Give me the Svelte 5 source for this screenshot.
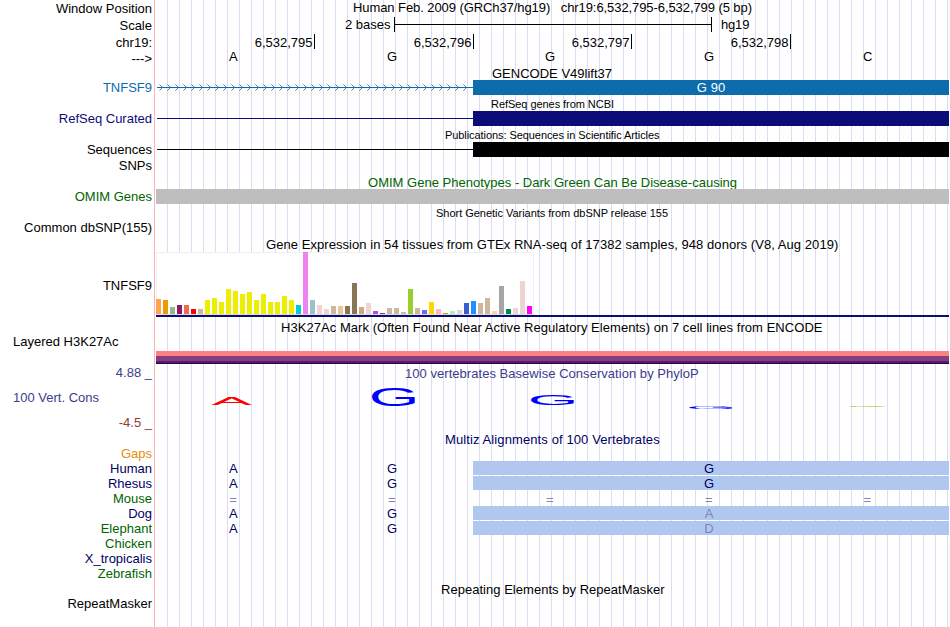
<script lang="ts">
  type Title = { text: string; x: number; width: number; base: number; color?: string; small?: boolean };
  type Row = {
    y: number;
    height: number;
    kind?: string;
    label?: string;
    color?: string;
    align?: string;
    title?: Title;
    bases?: string[];
    block?: boolean;
  };

  const navy = "#000064";
  const green = "#006400";
  const baseX = [233.3, 392, 550, 709, 867.7];

  const rows: Row[] = [
    { y: 1, height: 17, label: "Window Position",
      title: { text: "Human Feb. 2009 (GRCh37/hg19)\u00a0\u00a0\u00a0chr19:6,532,795-6,532,799 (5 bp)", x: 353, width: 399, base: 12 } },
    { y: 18, height: 17, kind: "scale", label: "Scale" },
    { y: 35, height: 16, kind: "ruler", label: "chr19:" },
    { y: 51, height: 15, kind: "sequence", label: "--->" },
    { y: 66, height: 14, title: { text: "GENCODE V49lift37", x: 492, width: 120, base: 78 } },
    { y: 80, height: 15, kind: "gencode", label: "TNFSF9", color: "#0c6cac" },
    { y: 95, height: 16, title: { text: "RefSeq genes from NCBI", x: 491, width: 123, base: 108, small: true } },
    { y: 111, height: 15, kind: "refseq", label: "RefSeq Curated", color: "#0c0c78" },
    { y: 126, height: 16, title: { text: "Publications: Sequences in Scientific Articles", x: 445, width: 214.5, base: 139, small: true } },
    { y: 142, height: 16, kind: "pubs", label: "Sequences" },
    { y: 158, height: 15, label: "SNPs" },
    { y: 173, height: 16, title: { text: "OMIM Gene Phenotypes - Dark Green Can Be Disease-causing", x: 368, width: 369, base: 187, color: green } },
    { y: 189, height: 15, kind: "omim", label: "OMIM Genes", color: green },
    { y: 204, height: 16, title: { text: "Short Genetic Variants from dbSNP release 155", x: 436, width: 232, base: 217, small: true } },
    { y: 220, height: 15, label: "Common dbSNP(155)" },
    { y: 235, height: 17, title: { text: "Gene Expression in 54 tissues from GTEx RNA-seq of 17382 samples, 948 donors (V8, Aug 2019)", x: 266, width: 572.3, base: 249 } },
    { y: 252, height: 67, kind: "gtex", label: "TNFSF9", align: "middle" },
    { y: 319, height: 15, title: { text: "H3K27Ac Mark (Often Found Near Active Regulatory Elements) on 7 cell lines from ENCODE", x: 281, width: 541.5, base: 332 } },
    { y: 334, height: 31, kind: "h3k27", label: "Layered H3K27Ac", align: "left" },
    { y: 365, height: 75, kind: "phylop",
      title: { text: "100 vertebrates Basewise Conservation by PhyloP", x: 405, width: 293.7, base: 378, color: "#3c3c8c" } },
    { y: 440, height: 6, title: { text: "Multiz Alignments of 100 Vertebrates", x: 445, width: 214.7, base: 444, color: navy } },
    { y: 446, height: 15, label: "Gaps", color: "#e68c0c" },
    { y: 461, height: 15, label: "Human", color: navy, bases: ["A", "G", "", "G"], block: true },
    { y: 476, height: 15, label: "Rhesus", color: navy, bases: ["A", "G", "", "G"], block: true },
    { y: 491, height: 15, label: "Mouse", color: green, bases: ["=", "=", "=", "=", "="] },
    { y: 506, height: 15, label: "Dog", color: navy, bases: ["A", "G", "", "a"], block: true },
    { y: 521, height: 15, label: "Elephant", color: green, bases: ["A", "G", "", "d"], block: true },
    { y: 536, height: 15, label: "Chicken", color: green },
    { y: 551, height: 15, label: "X_tropicalis", color: navy },
    { y: 566, height: 15, label: "Zebrafish", color: green },
    { y: 581, height: 15, title: { text: "Repeating Elements by RepeatMasker", x: 441, width: 223.5, base: 594 } },
    { y: 596, height: 31, label: "RepeatMasker" },
  ];

  const ticks = [
    { x: 314, text: "6,532,795" },
    { x: 473, text: "6,532,796" },
    { x: 631, text: "6,532,797" },
    { x: 790, text: "6,532,798" },
  ];

  const arrows = Array.from({ length: 39 }, (_, i) => 159 + i * 8);

  // GTEx medians, one bar per tissue
  const tissues: [string, number][] = [
    ["#ffa54f", 15], ["#ee9a00", 14], ["#8fbc8f", 7], ["#8b1c62", 9], ["#ee6a50", 9], ["#ff0000", 5],
    ["#cdb79e", 5], ["#eeee00", 14], ["#eeee00", 16], ["#eeee00", 12], ["#eeee00", 25], ["#eeee00", 23],
    ["#eeee00", 20], ["#eeee00", 22], ["#eeee00", 14], ["#eeee00", 20], ["#eeee00", 12], ["#eeee00", 12],
    ["#eeee00", 18], ["#eeee00", 14], ["#00cdcd", 9], ["#ee82ee", 62], ["#9ac0cd", 14], ["#eed5d2", 9],
    ["#eed5d2", 5], ["#cdb79e", 8], ["#eec591", 8], ["#8b7355", 8], ["#8b7355", 31], ["#cdaa7d", 7],
    ["#eed5d2", 11], ["#b452cd", 3], ["#7a378b", 1], ["#cdb79e", 6], ["#cdb79e", 6], ["#cdb79e", 2],
    ["#9acd32", 25], ["#cdb79e", 6], ["#7a67ee", 4], ["#ffd700", 12], ["#ffb6c1", 5], ["#cd9b1d", 1],
    ["#b4eeb4", 3], ["#d9d9d9", 4], ["#3a5fcd", 11], ["#1e90ff", 13], ["#cdb79e", 11], ["#cdb79e", 16],
    ["#ffd39b", 3], ["#a6a6a6", 28], ["#008b45", 5], ["#eed5d2", 6], ["#eed5d2", 33], ["#ff00ff", 8],
  ];

  // stretched logo letters: left edge, baseline, x and y scale
  const logo = [
    { c: "A", x: 211.5, y: 405, sx: 0.606, sy: 0.113, fill: "#ff0000" },
    { c: "G", x: 368.8, y: 405.6, sx: 0.652, sy: 0.262, fill: "#0000ff" },
    { c: "G", x: 527.8, y: 404.8, sx: 0.652, sy: 0.152, fill: "#0000ff" },
    { c: "G", x: 685.9, y: 408.9, sx: 0.652, sy: 0.041, fill: "#0000ff" },
    { c: "C", x: 845.7, y: 407, sx: 0.61, sy: 0.013, fill: "#b4b400" },
  ];
</script>

<main class="browser">
  {#each rows as row}
    <div class="row" style:height="{row.height}px">
      {#if row.kind === "phylop"}
        <div class="label conservation">
          <span>4.88 _</span>
          <span class="name">100 Vert. Cons</span>
          <span class="min">-4.5 _</span>
        </div>
      {:else}
        <div class="label {row.align ?? ''}" style:color={row.color}>{row.label ?? ""}</div>
      {/if}

      <svg class="track" width="795" height={row.height} viewBox="155 {row.y} 795 {row.height}">
        {#if row.title}
          <text
            class:small={row.title.small}
            x={row.title.x}
            y={row.title.base}
            textLength={row.title.width}
            fill={row.title.color ?? "#000"}
          >{row.title.text}</text>
        {/if}

        {#if row.kind === "scale"}
          <text x="344.9" y="29" textLength="45.5">2 bases</text>
          <path d="M394 24h318v1H394zM394 17h1v15h-1zM711 17h1v15h-1z" />
          <text x="720.9" y="29" textLength="28.5">hg19</text>
        {:else if row.kind === "ruler"}
          {#each ticks as tick}
            <text x={tick.x - 59.2} y="47" textLength="57.7">{tick.text}</text>
            <rect x={tick.x} y="34" width="1" height="15" />
          {/each}
        {:else if row.kind === "sequence"}
          {#each ["A", "G", "G", "G", "C"] as base, i}
            <text class="base" x={baseX[i]} y="61">{base}</text>
          {/each}
        {:else if row.kind === "gencode"}
          <g fill="#0c6cac">
            <rect x="157" y="87" width="316" height="1" />
            <rect x="473" y="80" width="476" height="15" />
          </g>
          {#each arrows as x}
            <path class="arrow" d="M{x + 0.5} 84.5l3 3l-3 3" />
          {/each}
          <text class="exon" x="696.8" y="92" textLength="28.5">G 90</text>
        {:else if row.kind === "refseq"}
          <path fill="#0c0c78" d="M157 118h316v1H157zM473 111h476v15H473z" />
        {:else if row.kind === "pubs"}
          <path d="M157 149h316v1H157zM473 142h476v15H473z" />
        {:else if row.kind === "omim"}
          <rect x="156" y="189" width="793" height="15" fill="#bebebe" />
        {:else if row.kind === "gtex"}
          <rect x="156.5" y="252.5" width="377" height="62" fill="#fff" stroke="#f0f0f0" />
          <rect x="156" y="314" width="378" height="1" fill="#dcdcdc" />
          {#each tissues as [color, value], i}
            <rect x={156 + i * 7} y={314 - value} width="5" height={value} fill={color} />
          {/each}
          <rect x="156" y="315" width="793" height="2" fill="#0c0c78" />
        {:else if row.kind === "h3k27"}
          <rect x="156" y="351" width="793" height="5" fill="#ff8080" />
          <rect x="156" y="356" width="793" height="5" fill="#804080" />
          <rect x="156" y="361" width="793" height="2" fill="#641478" />
          <rect x="156" y="363" width="793" height="1" fill="#180c30" />
        {:else if row.kind === "phylop"}
          {#each logo as l}
            <text class="logo" fill={l.fill} transform="translate({l.x} {l.y}) scale({l.sx} {l.sy})">{l.c}</text>
          {/each}
        {/if}

        {#if row.block}
          <rect x="473" y={row.y} width="476" height="14" fill="#b0c8f0" />
        {/if}
        {#each row.bases ?? [] as base, i}
          <text
            class="base species"
            class:mismatch={base === "=" || base !== base.toUpperCase()}
            x={base === "=" ? baseX[i] - 0.3 : baseX[i]}
            y={base === "=" ? row.y + 13 : row.y + 12}
          >{base.toUpperCase()}</text>
        {/each}
      </svg>
    </div>
  {/each}
</main>

<style>
  :global(body) {
    background: #fff;
    overflow: hidden;
  }
  .browser {
    box-sizing: border-box;
    width: 950px;
    height: 627px;
    padding-top: 1px;
    overflow: hidden;
    font-family: "Liberation Sans", Arial, sans-serif;
    font-size: 13px;
    line-height: 15px;
    color: #000;
    background:
      linear-gradient(#ffb4b4, #ffb4b4) 154px 0 / 1px 100% no-repeat,
      repeating-linear-gradient(90deg, #dcdcf5 0 1px, transparent 1px 12px) 167px 0 / 783px 100% no-repeat;
  }
  .row {
    display: flex;
    gap: 3px;
  }
  .label {
    width: 152px;
    flex: none;
    text-align: right;
    white-space: nowrap;
  }
  .label.middle {
    align-self: center;
  }
  .label.left {
    box-sizing: border-box;
    padding-left: 13px;
    text-align: left;
  }
  .conservation {
    display: grid;
    grid-template-rows: repeat(3, 25px);
    color: #3c3c8c;
  }
  .conservation .name {
    padding-left: 13px;
    text-align: left;
  }
  .conservation .min {
    color: #8c3c3c;
  }
  .track {
    display: block;
    flex: none;
    overflow: visible;
  }
  .small {
    font-size: 11px;
  }
  .base {
    text-anchor: middle;
  }
  .species {
    fill: #000064;
  }
  .species.mismatch {
    fill: #8084b8;
  }
  .exon {
    fill: #fff;
  }
  .arrow {
    fill: none;
    stroke: #0c6cac;
    stroke-width: 0.8;
  }
  .logo {
    font-size: 100px;
  }
</style>
